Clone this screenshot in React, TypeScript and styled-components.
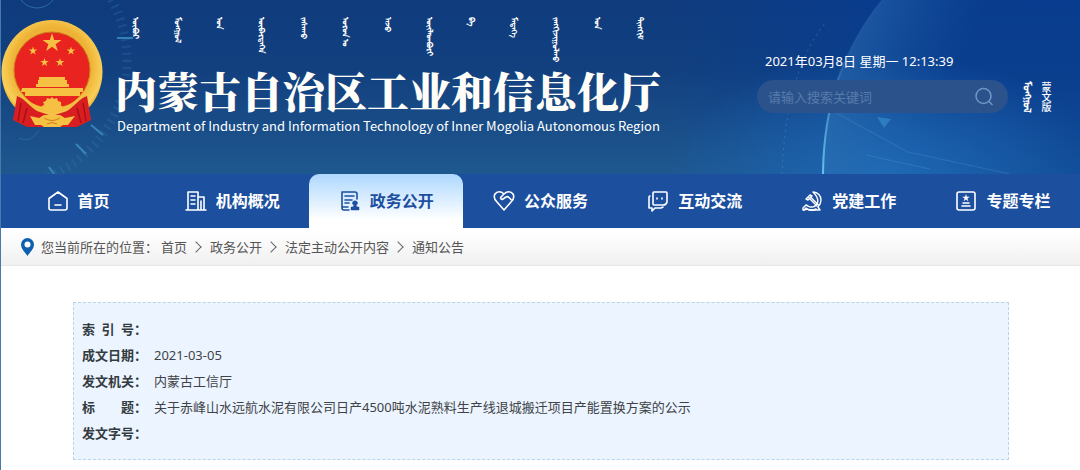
import React from "react";
import styled, { createGlobalStyle } from "styled-components";

const GlobalStyle = createGlobalStyle`
  * { box-sizing: border-box; }
  body {
    margin: 0;
    background: #fff;
    color: #3f4347;
    font-family: "Noto Sans", "Noto Sans CJK SC", sans-serif;
    font-size: 13px;
    line-height: 26px;
  }
  h1, p, dl, dt, dd, ol, ul { margin: 0; padding: 0; }
  ol, ul { list-style: none; }
  a { color: inherit; text-decoration: none; }
`;

const Page = styled.div`
  display: flow-root;
  min-height: 100vh;
  border-left: 1px solid #4a78a8;
`;

const Header = styled.header`
  position: relative;
  overflow: hidden;
  display: flex;
  justify-content: space-between;
  min-height: 174px;
  padding: 16px 29px 0 0;
  color: #fff;
  background:
    radial-gradient(ellipse 220px 120px at 82% 100%, rgba(40, 125, 200, 0.6), transparent),
    linear-gradient(90deg, transparent 62%, rgba(0, 60, 160, 0.45) 82%),
    linear-gradient(180deg, #0f3b7d 0%, #12407f 40%, #1f588f 100%);
`;

const Backdrop = styled.svg`
  position: absolute;
  top: 0;
  height: 174px;
`;
const LeftBackdrop = styled(Backdrop)`
  left: 0;
  width: 340px;
`;
const RightBackdrop = styled(Backdrop)`
  right: 0;
  width: 320px;
`;

const Brand = styled.div`
  position: relative;
  display: flex;
  gap: 12px;
`;

const Emblem = styled.svg`
  width: 102px;
  height: 110px;
  margin-top: 4px;
`;

const Names = styled.div`
  display: flex;
  flex-direction: column;
`;

const MongolianRow = styled.div`
  display: flex;
  justify-content: space-around;
  height: 48px;
  padding-top: 1px;
`;

const MongolianWord = styled.span<{ $large?: boolean }>`
  writing-mode: vertical-lr;
  font-size: ${(p) => (p.$large ? "10px" : "8px")};
  line-height: ${(p) => (p.$large ? "18px" : "12px")};
  font-weight: 700;
  white-space: nowrap;
`;

const Title = styled.h1`
  font-size: 42px;
  line-height: 52px;
  font-weight: 900;
  font-family: "Noto Serif CJK SC", "Noto Sans CJK SC", serif;
  white-space: nowrap;
  color: #fffef8;
`;

const Subtitle = styled.p`
  padding-left: 2px;
  font-family: "Noto Sans CJK SC", sans-serif;
  font-size: 13px;
  line-height: 20px;
  font-weight: 400;
  white-space: nowrap;
`;

const Tools = styled.div`
  position: relative;
  display: flex;
  flex-direction: column;
  padding-top: 32px;
`;

const Clock = styled.time`
  padding-left: 8px;
  line-height: 26px;
  margin-bottom: 6px;
`;

const ToolRow = styled.div`
  display: flex;
  align-items: center;
  gap: 11px;
`;

const Search = styled.form`
  display: flex;
  align-items: center;
  width: 251px;
  height: 33px;
  padding: 0 14px 0 11px;
  border-radius: 17px;
  background: #2b528b;
`;

const SearchInput = styled.input`
  flex: 1;
  min-width: 0;
  border: 0;
  outline: 0;
  padding: 0;
  background: transparent;
  color: #fff;
  font: inherit;
  font-size: 13px;
  &::placeholder { color: #587bab; opacity: 1; }
`;

const SearchButton = styled.button`
  display: flex;
  padding: 0;
  border: 0;
  background: transparent;
  color: #6f94c4;
  svg { width: 20px; height: 20px; }
`;

const LanguageLink = styled.a`
  display: flex;
  align-items: center;
  gap: 4px;
`;

const LanguageName = styled.span`
  writing-mode: vertical-rl;
  font-family: "Noto Sans CJK SC", sans-serif;
  font-size: 10px;
  line-height: 10px;
  font-weight: 500;
`;

const Nav = styled.nav`
  background: #1d4f9f;
  ul { display: flex; }
  li { flex: 1; }
`;

const NavLink = styled.a<{ $active?: boolean }>`
  display: flex;
  align-items: center;
  justify-content: center;
  gap: 9px;
  height: 54px;
  font-size: 16px;
  font-weight: 700;
  white-space: nowrap;
  color: ${(p) => (p.$active ? "#1d4f9f" : "#fff")};
  background: ${(p) => (p.$active ? "linear-gradient(180deg, #aed8ff 0%, #fff 85%)" : "none")};
  border-radius: ${(p) => (p.$active ? "10px 10px 0 0" : "0")};
  svg { width: 22px; height: 22px; flex: none; }
`;

const CrumbBar = styled.nav`
  display: flex;
  align-items: center;
  height: 38px;
  padding-left: 19px;
  color: #555;
  background: linear-gradient(180deg, #fff 10%, #f0f0f0 100%);
  border-bottom: 1px solid #e6e6e6;
  > svg { width: 15px; height: 20px; margin-right: 6px; }
  ol { display: flex; margin-left: 3px; }
  li { display: flex; align-items: center; }
  li + li::before {
    content: "";
    width: 7px;
    height: 7px;
    margin: 0 10px 0 5px;
    border: solid #666;
    border-width: 1px 1px 0 0;
    transform: rotate(45deg);
  }
`;

const Meta = styled.dl`
  margin: 36px 71px 10px 72px;
  padding: 13px 8px;
  background: #ecf5ff;
  border: 1px dashed #b9d5e8;
`;

const MetaRow = styled.div`
  display: flex;
`;

const MetaTerm = styled.dt`
  width: 72px;
  flex: none;
  font-weight: 700;
  color: #333a40;
  white-space: pre;
`;

const TermLetters = styled.span`
  display: inline-flex;
  justify-content: space-between;
  width: 52px;
`;

function starPoints(cx: number, cy: number, r: number) {
  return Array.from({ length: 10 }, (_, i) => {
    const radius = i % 2 ? r * 0.38 : r;
    const a = (Math.PI / 5) * i - Math.PI / 2;
    return `${(cx + radius * Math.cos(a)).toFixed(1)},${(cy + radius * Math.sin(a)).toFixed(1)}`;
  }).join(" ");
}

const NationalEmblem = () => (
  <Emblem viewBox="0 0 102 110" role="img" aria-label="国徽">
    <defs>
      <radialGradient id="gold" cx="50%" cy="45%" r="55%">
        <stop offset="0.7" stopColor="#eeb336" />
        <stop offset="0.9" stopColor="#f8cf58" />
        <stop offset="1" stopColor="#e9a72c" />
      </radialGradient>
    </defs>
    <ellipse cx="51" cy="52" rx="50.500" ry="52" fill="url(#gold)" />
    <circle cx="51" cy="50" r="38" fill="#e9231f" stroke="#cb7b19" strokeWidth="1" />
    <path d="M16 76C22 77 27 85 36 91L51 96 66 91C75 85 80 77 86 76L90 100 76 107H26L12 100Z" fill="#d81e20" />
    <path d="M20 83 17 101M26 88 22 103M82 83 85 101M76 88 80 103" stroke="#a80f16" strokeWidth="1.500" />
    <path d="M16 76C22 77 30 87 41 91L46 87H56L61 91C72 87 80 77 86 76L84 71C75 82 68 86 62 87L57 83H45L40 87C34 86 27 82 18 71Z" fill="#f3bd3f" />
    <path d="M24 76H78C73 82 68 85 62 86L57 82H45L40 86C34 85 28 82 24 76Z" fill="#e9231f" />
    <g fill="#f6c143">
      <polygon points={starPoints(51, 23, 10)} />
      <polygon points={starPoints(32, 31, 4.500)} />
      <polygon points={starPoints(70, 31, 4.500)} />
      <polygon points={starPoints(43.500, 42.500, 4.500)} />
      <polygon points={starPoints(59, 42.500, 4.500)} />
      <path d="M38 57h26v3h2v4h2v3H35v-3h2v-4h1z" />
      <path d="M21 68h61v4h-3v4H24v-4h-4z" />
      <path d="m42 82 3-1 1-3 3 1 2-2 2 2 3-1 1 3 3 1v4l2 3-10 4-10-4 2-3Z" />
      <path d="M29 96l9 2 5-3h16l5 3 10-2-7 9h-5l-3 2H43l-3-2h-6Z" />
    </g>
    <path d="M43 98q8 5 16 0M46 104q5-3 10 0" stroke="#cc7e1c" fill="none" />
  </Emblem>
);

const strokeProps = {
  viewBox: "0 0 22 22",
  fill: "none",
  stroke: "currentColor",
  strokeWidth: 1.6,
  strokeLinejoin: "round" as const,
  strokeLinecap: "round" as const,
  "aria-hidden": true,
};

const HomeIcon = () => (
  <svg {...strokeProps}>
    <path d="M2 8.500 11 2l9 6.500V18a2 2 0 0 1-2 2H4a2 2 0 0 1-2-2ZM8 15h6" />
  </svg>
);
const BuildingIcon = () => (
  <svg {...strokeProps}>
    <path d="M1 20h20M3 20V2h10v18M13 7h6v13M6 6h4M6 10h4M6 14h4M16 11v9" />
  </svg>
);
const DocumentIcon = () => (
  <svg {...strokeProps}>
    <path d="M18 9V4a2 2 0 0 0-2-2H3v16a2 2 0 0 0 2 2h5M3 17h6M6 6h9M6 10h7M6 13h4" />
    <path d="M16 11a2 2 0 0 1 1 4l1 2h2v3h-8v-3h2l1-2a2 2 0 0 1 1-4Z" fill="currentColor" strokeWidth="0.500" />
  </svg>
);
const HeartIcon = () => (
  <svg {...strokeProps}>
    <path d="M11 4C8 1 4 1 2 4c-2 3.500 0 6 2 8l7 8 7-8c2-2 4-4.500 2-8-2-3-6-3-9 0L8 7c-1 1.500.500 3 2 2l3-2c1-.7 2-.5 3 .5l2 2" />
  </svg>
);
const ChatIcon = () => (
  <svg {...strokeProps}>
    <path d="M7 2h12a1 1 0 0 1 1 1v9a4 4 0 0 1-4 3H7a1 1 0 0 1-1-1V3a1 1 0 0 1 1-1ZM3 6a1 1 0 0 0-1 1v11h3v3l3-3h6l2-1M10 8v1M15 8v1" />
  </svg>
);
const PartyIcon = () => (
  <svg {...strokeProps} strokeWidth={1.4}>
    <path d="M12 2c5 0 8 4 8 8 0 3-1 5-3 7l2 3h-3l-1-1c-4 2-8 1-10-1l-2 2H2v-2l3-3 2 1c3 2 7 1 9-2 2-4 0-8-4-12Z" />
    <path d="m5 9 4-4 2 1-4 4ZM8 8l8 8M9.500 7l8 8M3 20c4-2 8 1 12 0" />
  </svg>
);
const StarCardIcon = () => (
  <svg {...strokeProps}>
    <rect x="2" y="2" width="18" height="18" rx="2" />
    <polygon points={starPoints(11, 8, 4)} fill="currentColor" stroke="none" />
    <path d="M8 13h6M7 16h8" />
  </svg>
);

const NAV_ITEMS = [
  { label: "首页", Icon: HomeIcon },
  { label: "机构概况", Icon: BuildingIcon },
  { label: "政务公开", Icon: DocumentIcon, active: true },
  { label: "公众服务", Icon: HeartIcon },
  { label: "互动交流", Icon: ChatIcon },
  { label: "党建工作", Icon: PartyIcon },
  { label: "专题专栏", Icon: StarCardIcon },
];

const MONGOLIAN = ["ᠥᠪᠥᠷ", "ᠮᠣᠩᠭᠣᠯ", "ᠤᠨ", "ᠥᠪᠡᠷᠲᠡᠭᠡᠨ", "ᠵᠠᠰᠠᠬᠤ", "ᠣᠷᠤᠨ ᠤ", "ᠠᠵᠤ", "ᠦᠢᠯᠡᠳᠪᠦᠷᠢ", "ᠪᠠ", "ᠮᠡᠳᠡᠭᠡ", "ᠵᠠᠩᠭᠢᠵᠢᠭᠤᠯᠬᠤ", "ᠤᠨ", "ᠲᠢᠩᠬᠢᠮ"];

const CRUMBS = ["首页", "政务公开", "法定主动公开内容", "通知公告"];

const META = [
  { term: ["索", "引", "号"], value: "" },
  { term: ["成文日期"], value: "2021-03-05" },
  { term: ["发文机关"], value: "内蒙古工信厅" },
  { term: ["标", "题"], value: "关于赤峰山水远航水泥有限公司日产4500吨水泥熟料生产线退城搬迁项目产能置换方案的公示" },
  { term: ["发文字号"], value: "" },
];

export default function App() {
  return (
    <>
      <GlobalStyle />
      <Page>
        <Header>
          <LeftBackdrop viewBox="0 0 340 174" fill="none" aria-hidden="true">
            <circle cx="36" cy="-12" r="20" stroke="#2b6ca4" />
            <circle cx="0" cy="60" r="126" stroke="#3a82b5" strokeOpacity="0.250" strokeWidth="9" strokeDasharray="2 5" />
            <path d="M116 38h16M90 125l12 10M75 144l10 10M48 167l5 7" stroke="#3d91c6" strokeOpacity="0.800" strokeWidth="2" />
            <path d="M18 138q12 6 20-8" stroke="#2c669e" />
          </LeftBackdrop>
          <RightBackdrop viewBox="0 0 320 174" fill="none" aria-hidden="true">
            <defs>
              <linearGradient id="beam" x1="0" y1="0" x2="1" y2="0.300">
                <stop offset="0" stopColor="#4f9ad2" stopOpacity="0.450" />
                <stop offset="0.600" stopColor="#2a72b8" stopOpacity="0" />
              </linearGradient>
              <linearGradient id="rim" x1="0" y1="0" x2="0" y2="1">
                <stop offset="0.300" stopColor="#66b6e6" stopOpacity="0.050" />
                <stop offset="1" stopColor="#66c0ee" />
              </linearGradient>
            </defs>
            <path d="M63 174Q64 70 122 0H320V174Z" fill="url(#beam)" />
            <path d="M63 174Q64 70 122 0" stroke="url(#rim)" strokeWidth="2" />
            <path d="M22 174Q26 70 66 22" stroke="#4d8bc0" strokeOpacity="0.500" strokeDasharray="2 4" />
            <path d="M76 113 148 152 250 174M106 155l64 14" stroke="#62a8dc" strokeOpacity="0.250" />
            <path d="m117 117 14 2-7 9Z" fill="#3c91d0" fillOpacity="0.600" />
          </RightBackdrop>
          <Brand>
            <NationalEmblem />
            <Names>
              <MongolianRow lang="mn-Mong">
                {MONGOLIAN.map((word, i) => (
                  <MongolianWord key={i}>{word}</MongolianWord>
                ))}
              </MongolianRow>
              <Title>内蒙古自治区工业和信息化厅</Title>
              <Subtitle lang="en">
                Department of Industry and Information Technology of Inner Mogolia Autonomous Region
              </Subtitle>
            </Names>
          </Brand>
          <Tools>
            <Clock dateTime="2021-03-08T12:13:39">2021年03月8日 星期一 12:13:39</Clock>
            <ToolRow>
              <Search role="search">
                <SearchInput type="text" aria-label="搜索关键词" placeholder="请输入搜索关键词" />
                <SearchButton type="button" aria-label="搜索">
                  <svg viewBox="0 0 20 20" fill="none" stroke="currentColor" strokeWidth="1.600">
                    <circle cx="9.500" cy="9" r="7.500" />
                    <path d="m15 14.500 3 3" strokeLinecap="round" />
                  </svg>
                </SearchButton>
              </Search>
              <LanguageLink href="#mn">
                <MongolianWord $large lang="mn-Mong">ᠮᠣᠩᠭᠣᠯ</MongolianWord>
                <LanguageName>蒙文版</LanguageName>
              </LanguageLink>
            </ToolRow>
          </Tools>
        </Header>
        <Nav aria-label="主导航">
          <ul>
            {NAV_ITEMS.map(({ label, Icon, active }) => (
              <li key={label}>
                <NavLink href="#" $active={active} aria-current={active ? "page" : undefined}>
                  <Icon />
                  {label}
                </NavLink>
              </li>
            ))}
          </ul>
        </Nav>
        <CrumbBar aria-label="当前位置">
          <svg viewBox="0 0 15 20" aria-hidden="true">
            <path d="M7.500 1A6.500 6.500 0 0 0 1 7.500C1 12 5 15 7.500 19 10 15 14 12 14 7.500A6.500 6.500 0 0 0 7.500 1Z" fill="#0f5fae" />
            <circle cx="7.500" cy="7.500" r="3" fill="#fff" />
          </svg>
          <span>您当前所在的位置：</span>
          <ol>
            {CRUMBS.map((crumb) => (
              <li key={crumb}>
                <a href="#">{crumb}</a>
              </li>
            ))}
          </ol>
        </CrumbBar>
        <Meta>
          {META.map(({ term, value }) => (
            <MetaRow key={term.join("")}>
              <MetaTerm>
                <TermLetters>
                  {term.map((part) => (
                    <span key={part}>{part}</span>
                  ))}
                </TermLetters>
                ：
              </MetaTerm>
              <dd>{value}</dd>
            </MetaRow>
          ))}
        </Meta>
      </Page>
    </>
  );
}
